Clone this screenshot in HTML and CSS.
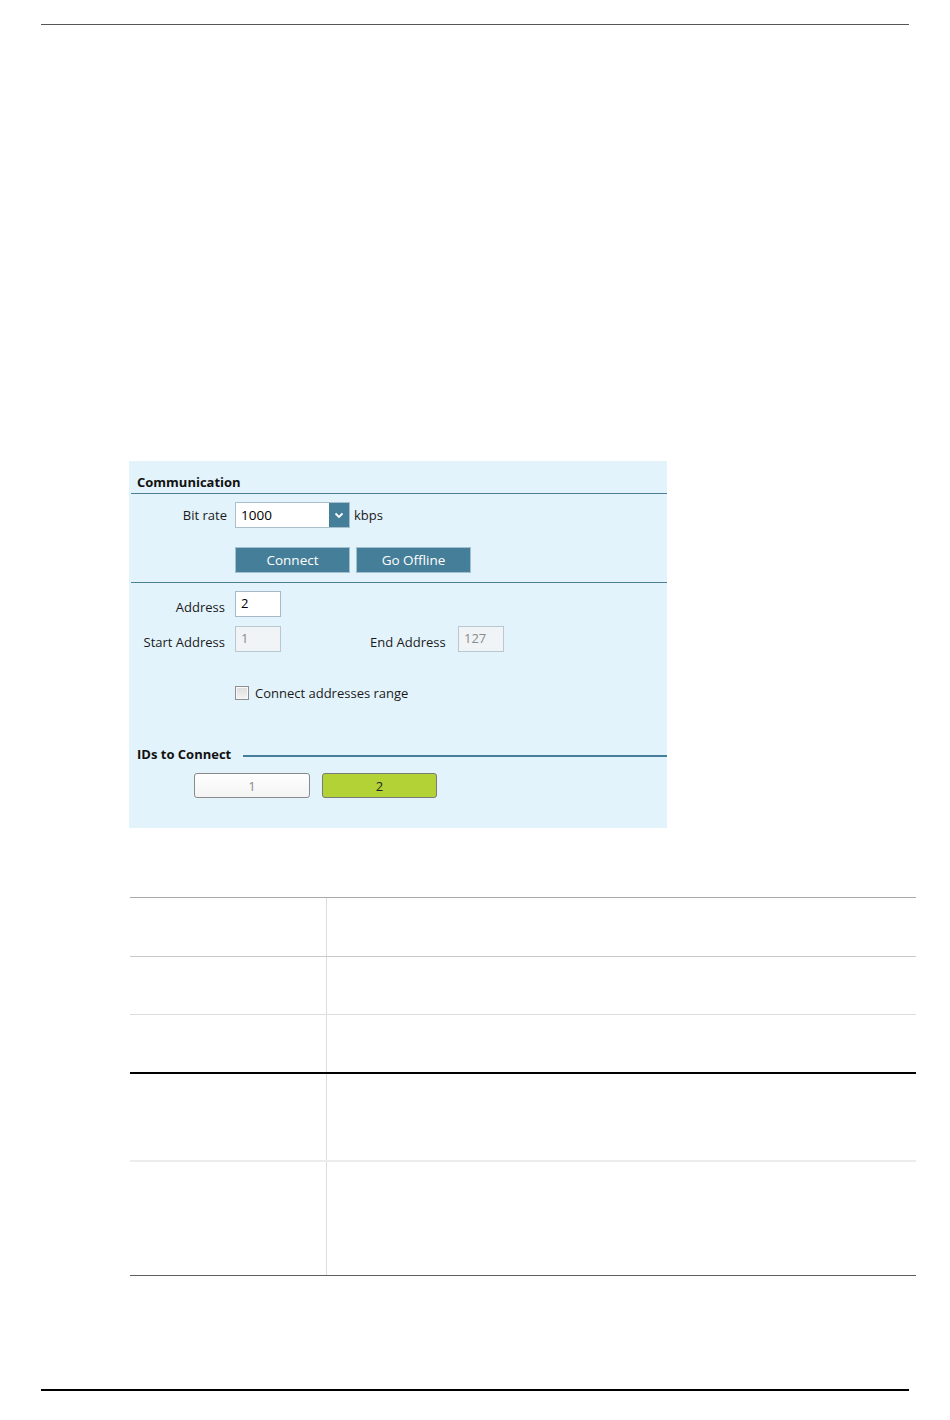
FILE: index.html
```html
<html>

<head>
    <meta charset="utf-8">
    <title>Communication</title>
    <link rel="stylesheet" href="styles.css">
</head>

<body>
    <div class="rule top"></div>

    <div class="comm">
        <div class="comm-title">Communication</div>

        <div class="row bitrate">
            <span class="label">Bit rate</span>
            <div class="select">
                <span class="select-value">1000</span>
                <span class="select-btn">
                    <svg width="10" height="7" viewBox="0 0 10 7">
                        <path d="M1.5 1.5 L5 5 L8.5 1.5" fill="none" stroke="#fff" stroke-width="1.8"/>
                    </svg>
                </span>
            </div>
            <span class="unit">kbps</span>
        </div>

        <div class="row actions">
            <button class="btn">Connect</button>
            <button class="btn">Go Offline</button>
        </div>

        <div class="sep"></div>

        <div class="row addr">
            <span class="label label-addr">Address</span>
            <div class="field">2</div>
        </div>

        <div class="row addr range">
            <span class="label label-addr">Start Address</span>
            <div class="field disabled">1</div>
            <span class="label-end">End Address</span>
            <div class="field disabled">127</div>
        </div>

        <div class="row check">
            <span class="checkbox"></span>
            <span>Connect addresses range</span>
        </div>

        <div class="ids-head">
            <span class="ids-title">IDs to Connect</span>
            <span class="ids-line"></span>
        </div>

        <div class="row ids">
            <button class="id-btn">1</button>
            <button class="id-btn active">2</button>
        </div>
    </div>

    <div class="spec">
        <div class="spec-row r1"><div class="cell-a"></div><div class="cell-b"></div></div>
        <div class="spec-row r2"><div class="cell-a"></div><div class="cell-b"></div></div>
        <div class="spec-row r3"><div class="cell-a"></div><div class="cell-b"></div></div>
        <div class="spec-row r4"><div class="cell-a"></div><div class="cell-b"></div></div>
        <div class="spec-row r5"><div class="cell-a"></div><div class="cell-b"></div></div>
    </div>

    <div class="rule bottom"></div>
</body>

</html>
```

FILE: styles.css
```css
* {
    box-sizing: border-box;
}

body {
    margin: 0;
    background: white;
    font: 13px "Open Sans", Lato, sans-serif;
    color: #1a1a1a;
}

.rule {
    width: 868px;
    margin-left: 41px;
}

.rule.top {
    margin-top: 24px;
    border-top: 1px solid #555;
}

.rule.bottom {
    margin-top: 113px;
    border-top: 2px solid #000;
}

/* communication panel */
.comm {
    width: 538px;
    height: 367px;
    margin: 436px 0 0 129px;
    background-color: #e3f3fb;
    overflow: hidden;
}

.comm-title {
    margin-left: 2px;
    padding: 14px 6px 3px;
    line-height: 15px;
    font-weight: bold;
    color: #111;
    border-bottom: 1px solid #4a7f96;
}

.row {
    display: flex;
    align-items: center;
}

.label {
    width: 98px;
    margin-right: 8px;
    text-align: right;
}

.label-addr {
    width: 96px;
    margin-right: 10px;
    padding-top: 5px;
}

.bitrate {
    margin-top: 8px;
    height: 26px;
}

.select {
    display: flex;
    width: 115px;
    height: 26px;
    background: white;
    border: 1px solid #a9c0cc;
}

.select-value {
    flex: 1;
    padding: 3px 0 0 5px;
    font-size: 13.5px;
    color: #000;
}

.select-btn {
    width: 20px;
    display: flex;
    align-items: center;
    justify-content: center;
    background-color: #457e98;
}

.unit {
    margin-left: 4px;
}

.actions {
    margin: 19px 0 0 106px;
    gap: 6px;
}

.btn {
    width: 115px;
    height: 26px;
    padding: 0;
    background-color: #457e98;
    border: 1px solid #a3c0cf;
    color: white;
    font: 13.5px "Open Sans", Lato, sans-serif;
}

.sep {
    margin: 9px 0 0 2px;
    border-top: 1px solid #4a7f96;
}

.addr {
    margin-top: 8px;
    height: 26px;
}

.range {
    margin-top: 9px;
}

.field {
    width: 46px;
    height: 26px;
    padding: 2px 0 0 5px;
    background: white;
    border: 1px solid #a5bac6;
    color: #000;
}

.field.disabled {
    background-color: #f1f4f6;
    border-color: #b8c8d0;
    color: #8a8a8a;
}

.label-end {
    margin-left: 89px;
    width: 88px;
    padding-top: 5px;
}

.check {
    margin: 32px 0 0 106px;
    gap: 6px;
}

.checkbox {
    width: 14px;
    height: 14px;
    border: 1px solid #8e8f8f;
    background: linear-gradient(#dcdcdc, #f4f4f4);
    box-shadow: inset 0 0 0 1px #f8f8f8;
}

.ids-head {
    display: flex;
    align-items: center;
    margin: 44px 0 0 8px;
    height: 16px;
}

.ids-title {
    font-weight: bold;
    color: #111;
}

.ids-line {
    flex: 1;
    margin: 3px 0 0 12px;
    border-top: 2px solid #457e98;
}

.ids {
    margin: 11px 0 0 65px;
    gap: 12px;
}

.id-btn {
    width: 116px;
    height: 25px;
    padding: 0;
    border: 1px solid #8a8a8a;
    border-radius: 3px;
    background: linear-gradient(#ffffff, #f3f3f3);
    color: #8a8a8a;
    font: 13px "Open Sans", Lato, sans-serif;
}

.id-btn.active {
    width: 115px;
    background: #b2d235;
    border-color: #7a7a7a;
    color: #222;
}

/* table below */
.spec {
    width: 786px;
    margin: 69px 0 0 130px;
    border-bottom: 1px solid #5e5e5e;
}

.spec-row {
    display: flex;
}

.cell-a {
    width: 197px;
    border-right: 1px solid #dcdcdc;
}

.cell-b {
    flex: 1;
}

.r1 {
    height: 59px;
    border-top: 1px solid #a9a9a9;
}

.r2 {
    height: 58px;
    border-top: 1px solid #c9c9c9;
}

.r3 {
    height: 58px;
    border-top: 1px solid #dedede;
}

.r4 {
    height: 88px;
    border-top: 2px solid #000;
}

.r5 {
    height: 115px;
    border-top: 2px solid #ececec;
}
```
